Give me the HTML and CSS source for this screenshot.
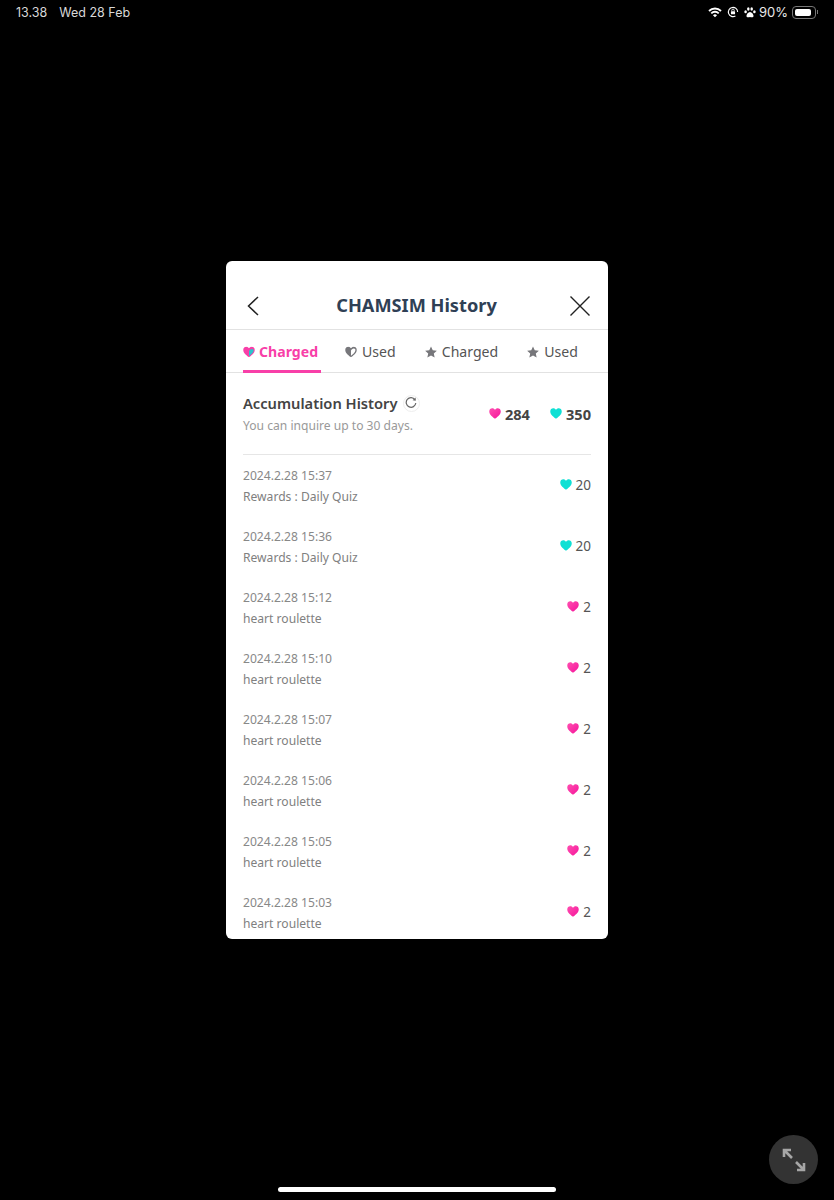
FILE: index.html
```html
<!DOCTYPE html>
<html lang="en">
<head>
    <meta charset="UTF-8">
    <meta name="viewport" content="width=device-width, initial-scale=1.0">
    <title>CHAMSIM History</title>
    <link rel="stylesheet" href="styles.css">
</head>
<body>

<svg class="defs" width="0" height="0">
    <defs>
        <linearGradient id="pinkFill" x1="0" y1="0" x2="1" y2="1">
            <stop offset="0" stop-color="#ff4fb0"/>
            <stop offset="1" stop-color="#f5149b"/>
        </linearGradient>
        <symbol id="heart" viewBox="0 0 24 22">
            <path d="M12 21.5C9 19 .5 13.5.5 6.8.5 3 3.400.5 6.500.5c2.300 0 4.300 1.200 5.500 3.200C13.200 1.700 15.200.5 17.500.5c3.100 0 6 2.500 6 6.300C23.500 13.500 15 19 12 21.500z"/>
        </symbol>
        <symbol id="star" viewBox="0 0 24 24">
            <path d="M12 .8l3.500 7.600 8.200.9-6.100 5.600 1.700 8.200L12 19l-7.300 4.100 1.700-8.200L.3 9.300l8.200-.9z"/>
        </symbol>
    </defs>
</svg>

<!-- Status bar -->
<div class="status-bar">
    <div class="status-left">
        <span>13.38</span>
        <span>Wed 28 Feb</span>
    </div>
    <div class="status-right">
        <svg class="wifi" viewBox="0 0 16 12" width="14" height="11">
            <path d="M8 11.500 5.700 9a3.300 3.300 0 0 1 4.600 0zM4.500 7.800 3 6.200a7 7 0 0 1 10 0l-1.500 1.600a5 5 0 0 0-7 0zM1.900 5.100.4 3.500a10.800 10.800 0 0 1 15.200 0l-1.500 1.600a8.700 8.700 0 0 0-12.200 0z" fill="#fff"/>
        </svg>
        <svg class="lock" viewBox="0 0 14 14" width="12" height="12">
            <path d="M9.800 11.600A5.400 5.400 0 1 1 12.400 7" fill="none" stroke="#fff" stroke-width="1.300"/>
            <rect x="4.600" y="6" width="4.800" height="3.600" rx=".6" fill="#fff"/>
            <path d="M5.600 6V5a1.400 1.400 0 0 1 2.800 0v1" fill="none" stroke="#fff"/>
        </svg>
        <svg class="paw" viewBox="0 0 14 13" width="12" height="11">
            <g fill="#fff">
                <ellipse cx="1.800" cy="5.600" rx="1.500" ry="1.900"/>
                <ellipse cx="5" cy="2.300" rx="1.500" ry="2"/>
                <ellipse cx="9" cy="2.300" rx="1.500" ry="2"/>
                <ellipse cx="12.200" cy="5.600" rx="1.500" ry="1.900"/>
                <path d="M7 5.800c2 0 4.200 2.700 4.200 4.800 0 1.900-2.400 1.700-4.200 1.200-1.800.5-4.200.7-4.200-1.200 0-2.100 2.200-4.800 4.200-4.800z"/>
            </g>
        </svg>
        <span class="battery-text">90%</span>
        <div class="battery"><div class="battery-level"></div></div>
        <div class="battery-tip"></div>
    </div>
</div>

<!-- History dialog -->
<div class="dialog">
    <div class="dialog-header">
        <svg class="back-icon" viewBox="0 0 12 20" width="12" height="20">
            <path d="M11 1 1.500 10 11 19" fill="none" stroke="#222" stroke-width="1.500"/>
        </svg>
        <h1>CHAMSIM History</h1>
        <svg class="close-icon" viewBox="0 0 20 20" width="20" height="20">
            <path d="M.5.500l19 19M19.500.500l-19 19" fill="none" stroke="#222" stroke-width="1.400"/>
        </svg>
    </div>

    <div class="tabs">
        <div class="tab tab-active">
            <svg class="tab-icon" viewBox="0 0 24 22">
                <use href="#heart" fill="#f83fa8"/>
                <path d="M12 9c1-2 3-4 6-4 2.500 0 3.500 1.800 3.300 3.500C21 12 16 16.500 12 19.500z" fill="#2bc4cc"/>
            </svg>
            <span>Charged</span>
        </div>
        <div class="tab">
            <svg class="tab-icon" viewBox="0 0 24 22">
                <use href="#heart" fill="#77777b"/>
                <path d="M12 8c1-2 3-4 5.500-4 2.500 0 3.500 1.800 3.300 3.500C20.500 11.500 16 15.500 12 18.500z" fill="#fff"/>
            </svg>
            <span>Used</span>
        </div>
        <div class="tab">
            <svg class="tab-icon" viewBox="0 0 24 24"><use href="#star" fill="#77777b"/></svg>
            <span>Charged</span>
        </div>
        <div class="tab">
            <svg class="tab-icon" viewBox="0 0 24 24"><use href="#star" fill="#77777b"/></svg>
            <span>Used</span>
        </div>
    </div>

    <div class="content">
        <div class="summary">
            <div>
                <div class="summary-title">
                    <h2>Accumulation History</h2>
                    <span class="refresh">
                        <svg viewBox="0 0 12 12" width="12" height="12">
                            <path d="M10 2.800A4.800 4.800 0 1 0 10.800 6" fill="none" stroke="#666" stroke-width="1.200"/>
                            <path d="M7.600 3.300 10.800 3.700 10.600.4z" fill="#666"/>
                        </svg>
                    </span>
                </div>
                <p class="summary-note">You can inquire up to 30 days.</p>
            </div>
            <div class="totals">
                <div class="total"><svg class="heart"><use href="#heart" fill="url(#pinkFill)"/></svg>284</div>
                <div class="total"><svg class="heart"><use href="#heart" fill="#0fe0d4"/></svg>350</div>
            </div>
        </div>

        <ul class="history" id="historyList"></ul>
    </div>
</div>

<!-- Expand button and home indicator -->
<div class="expand-button">
    <svg viewBox="0 0 26 26" width="26" height="26">
        <path d="M3 10V3h7M3 3l8 8M23 16v7h-7M23 23l-8-8" fill="none" stroke="#a6a6a6" stroke-width="2.600"/>
    </svg>
</div>
<div class="home-indicator"></div>

<script>
// Rows of the history list
const entries = [
    ['2024.2.28 15:37', 'Rewards : Daily Quiz', 'mint', 20],
    ['2024.2.28 15:36', 'Rewards : Daily Quiz', 'mint', 20],
    ['2024.2.28 15:12', 'heart roulette', 'pink', 2],
    ['2024.2.28 15:10', 'heart roulette', 'pink', 2],
    ['2024.2.28 15:07', 'heart roulette', 'pink', 2],
    ['2024.2.28 15:06', 'heart roulette', 'pink', 2],
    ['2024.2.28 15:05', 'heart roulette', 'pink', 2],
    ['2024.2.28 15:03', 'heart roulette', 'pink', 2]
];

const historyList = document.getElementById('historyList');
entries.forEach(function (entry) {
    const fill = entry[2] === 'mint' ? '#0fe0d4' : 'url(#pinkFill)';
    const row = document.createElement('li');
    row.className = 'history-row';
    row.innerHTML = `
        <div>
            <div class="history-date">${entry[0]}</div>
            <div class="history-desc">${entry[1]}</div>
        </div>
        <div class="history-amount"><svg class="heart"><use href="#heart" fill="${fill}"/></svg>${entry[3]}</div>`;
    historyList.appendChild(row);
});
</script>

</body>
</html>
```

FILE: styles.css
```css
* {
    box-sizing: border-box;
}
html, body {
    height: 100%;
}
body {
    margin: 0;
    background-color: #000;
    font-family: "Noto Sans", sans-serif;
    display: flex;
    align-items: center;
    justify-content: center;
    overflow: hidden;
}
.defs {
    position: absolute;
}

/* Status bar */
.status-bar {
    position: absolute;
    top: 0;
    left: 0;
    right: 0;
    height: 24px;
    padding: 0 16px;
    display: flex;
    align-items: center;
    justify-content: space-between;
    color: #d8d8d8;
    font-family: Inter, sans-serif;
    font-size: 12.500px;
}
.status-left {
    display: flex;
    gap: 12px;
}
.status-right {
    display: flex;
    align-items: center;
    gap: 5px;
    color: #e8e8e8;
    font-size: 13px;
}
.battery-text {
    margin-left: -2px;
}
.battery {
    width: 24px;
    height: 13px;
    margin-left: -1px;
    padding: 2px;
    border: 1px solid #777;
    border-radius: 4px;
}
.battery-level {
    width: 90%;
    height: 100%;
    background-color: #fff;
    border-radius: 2px;
}
.battery-tip {
    width: 1px;
    height: 4px;
    margin-left: -4px;
    background-color: #777;
}

/* Dialog */
.dialog {
    width: 382px;
    height: 678px;
    background-color: #fff;
    border-radius: 6px;
    overflow: hidden;
    display: flex;
    flex-direction: column;
}
.dialog-header {
    flex-shrink: 0;
    height: 69px;
    padding: 21px 18px 0 21px;
    display: flex;
    align-items: center;
    justify-content: space-between;
    border-bottom: 1px solid #e2e2e2;
}
.back-icon {
    margin-right: 4px;
}
.dialog-header h1 {
    margin: 0 0 2px;
    font-size: 18.200px;
    font-weight: 700;
    color: #2f4055;
}
.tabs {
    flex-shrink: 0;
    height: 43px;
    padding-left: 17px;
    display: flex;
    gap: 24px;
    border-bottom: 1px solid #e2e2e2;
}
.tab {
    height: 43px;
    padding-right: 5px;
    display: flex;
    align-items: center;
    gap: 5px;
    font-size: 14.100px;
    color: #555;
}
.tab-active {
    padding-top: 3px;
    padding-right: 3px;
    gap: 4px;
    color: #f83fa8;
    font-weight: 700;
    border-bottom: 3px solid #f83fa8;
}
.tab-icon {
    width: 12px;
    height: 12px;
}

/* Summary */
.content {
    padding: 0 17px;
}
.summary {
    height: 82px;
    display: flex;
    align-items: center;
    justify-content: space-between;
    border-bottom: 1px solid #e6e6e6;
}
.summary-title {
    display: flex;
    align-items: center;
    gap: 5px;
}
.summary-title h2 {
    margin: 0;
    font-size: 14.700px;
    font-weight: 600;
    color: #444;
}
.refresh {
    width: 17px;
    height: 17px;
    border: 1px solid #eee;
    border-radius: 50%;
    display: flex;
    align-items: center;
    justify-content: center;
}
.summary-note {
    margin: 4px 0 0;
    font-size: 12.100px;
    color: #999;
}
.totals {
    display: flex;
    gap: 20px;
}
.total {
    display: flex;
    align-items: center;
    gap: 4px;
    font-size: 14.600px;
    font-weight: 700;
    color: #444;
}
.heart {
    width: 12px;
    height: 11px;
}

/* History rows */
.history {
    margin: 0;
    padding: 0;
    list-style: none;
}
.history-row {
    height: 61px;
    display: flex;
    align-items: center;
    justify-content: space-between;
    color: #888;
    font-size: 12.100px;
}
.history-desc {
    margin-top: 4px;
    color: #808080;
}
.history-amount {
    margin-bottom: 2px;
    display: flex;
    align-items: center;
    gap: 4px;
    font-size: 13.500px;
    color: #555;
}

/* Overlays */
.expand-button {
    position: absolute;
    left: 769px;
    top: 1135px;
    width: 49px;
    height: 49px;
    border-radius: 50%;
    background-color: #333;
    display: flex;
    align-items: center;
    justify-content: center;
}
.home-indicator {
    position: absolute;
    left: 278px;
    top: 1187px;
    width: 278px;
    height: 5px;
    border-radius: 3px;
    background-color: #fff;
}
```
